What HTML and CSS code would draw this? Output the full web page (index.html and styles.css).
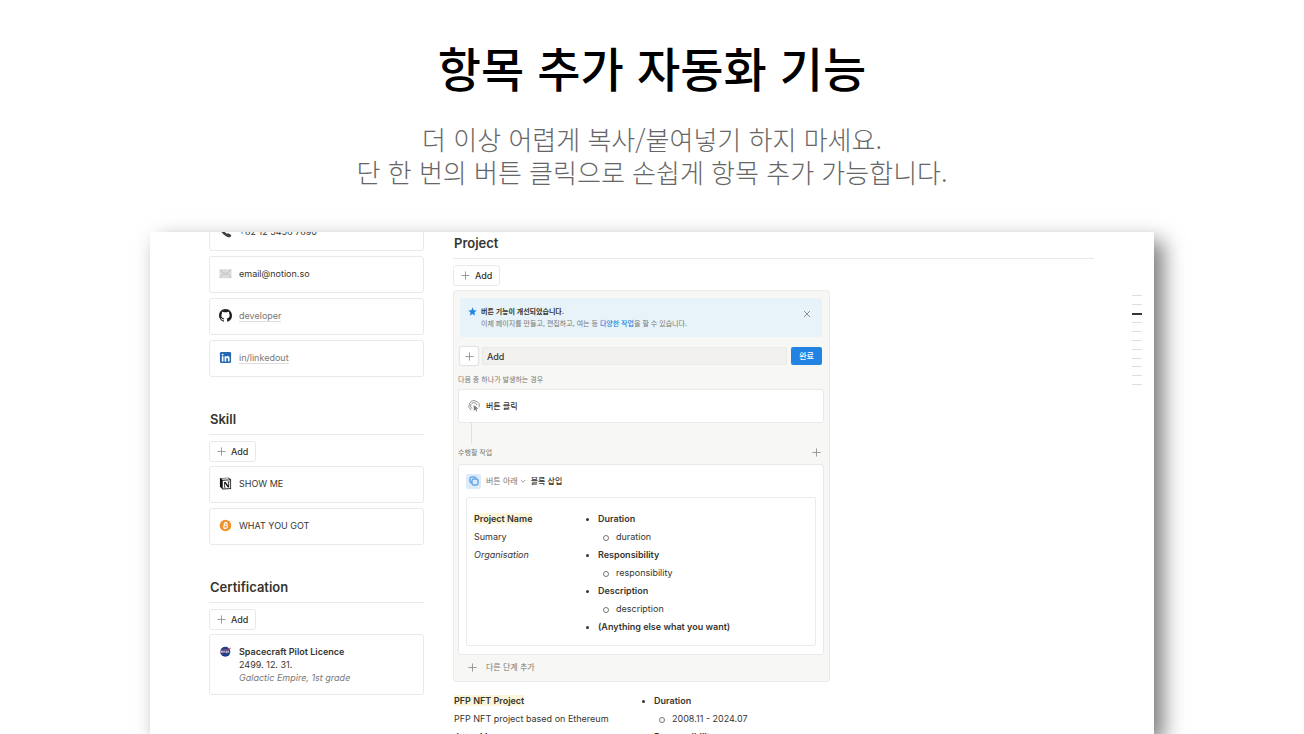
FILE: index.html
```html
<!DOCTYPE html>
<html lang="ko">
<head>
<meta charset="utf-8">
<meta name="viewport" content="width=device-width, initial-scale=1">
<title>항목 추가 자동화 기능</title>
<link rel="stylesheet" href="styles.css">
</head>
<body>
<svg class="defs" aria-hidden="true">
  <symbol id="plus" viewBox="0 0 10 10"><path d="M5 .5v9M.5 5h9" fill="none" stroke="currentColor" stroke-width="1"/></symbol>
</svg>
<header class="hero">
  <h1 class="hero-title">항목 추가 자동화 기능</h1>
  <p class="hero-text">더 이상 어렵게 복사/붙여넣기 하지 마세요.<br>단 한 번의 버튼 클릭으로 손쉽게 항목 추가 가능합니다.</p>
</header>
<main class="sheet">
  <aside class="side">
    <div class="cards contact">
      <div class="card">
        <svg class="icon" viewBox="0 0 14 14"><path d="M1.6 1.5 3.4.7 5.600 4 4.500 5.300Q6 7.800 8.700 9.500L10.200 8.800 13.300 11 12.400 12.900Q10.500 14 7.500 12.200 3 9.500 1.200 4.500.8 2.400 1.600 1.500z" fill="#3d4043"/></svg>
        <span>+82 12 3456 7890</span>
      </div>
      <div class="card">
        <svg class="icon" viewBox="0 0 14 14"><rect x=".5" y="2.500" width="13" height="9.500" rx=".6" fill="#dcdcdc"/><path d="M.8 2.900 7 8l6.200-5.100M.8 11.700 5.400 7M13.200 11.700 8.600 7" fill="none" stroke="#b4b4b4" stroke-width=".8"/></svg>
        <span>email@notion.so</span>
      </div>
      <div class="card">
        <svg class="icon" viewBox="0 0 16 16"><path fill="#1b1f23" d="M8 0C3.580 0 0 3.580 0 8c0 3.540 2.290 6.530 5.470 7.590.4.070.55-.17.55-.38 0-.19-.01-.82-.01-1.490-2.010.37-2.530-.49-2.690-.94-.09-.23-.48-.94-.82-1.130-.28-.15-.68-.52-.01-.53.63-.01 1.080.58 1.230.82.72 1.210 1.870.87 2.330.66.07-.52.28-.87.51-1.070-1.780-.2-3.640-.89-3.640-3.950 0-.87.31-1.590.82-2.150-.08-.2-.36-1.020.08-2.120 0 0 .67-.21 2.200.82.64-.18 1.320-.27 2-.27s1.360.09 2 .27c1.530-1.040 2.200-.82 2.200-.82.44 1.100.16 1.920.08 2.120.51.56.82 1.270.82 2.150 0 3.070-1.870 3.750-3.650 3.950.29.25.54.73.54 1.480 0 1.070-.01 1.930-.01 2.200 0 .21.15.46.55.38A8 8 0 0 0 16 8c0-4.420-3.580-8-8-8z"/></svg>
        <a class="link" href="#developer">developer</a>
      </div>
      <div class="card">
        <svg class="icon" viewBox="0 0 14 14"><rect x="1" y="1" width="12" height="12" rx="1.500" fill="#2467b2"/><circle cx="3.900" cy="3.900" r="1" fill="#fff"/><path d="M3 5.600h1.800v5.600H3zM6 5.600h1.700v.8c.9-1.400 3.700-1.300 3.700 1.500v3.300H9.600V8.300c0-1.600-1.800-1.500-1.800 0v2.900H6z" fill="#fff"/></svg>
        <a class="link" href="#linkedin">in/linkedout</a>
      </div>
    </div>

    <section class="block">
      <h2 class="heading">Skill</h2>
      <button class="add" type="button"><svg class="plus"><use href="#plus"/></svg>Add</button>
      <div class="cards">
        <div class="card">
          <svg class="icon" viewBox="0 0 14 14"><path d="M1 1.200 10.500.8 13 2.800v10L4 13.400 1 10.400z" fill="#111"/><path d="M2 1.700 10 1.400l1.600 1.200-7.800.4z" fill="#fff"/><path d="M4 4l8.100-.5v8.700L4 12.500z" fill="#fff"/><path d="M5.200 5.300h1.900L10 9.200V5.600l-.7-.2v-.5h2.200v.5l-.6.2v5.800H9.600L6.400 7v3.600l.8.200v.5H5.100v-.5l.5-.2V5.800z" fill="#111"/></svg>
          <span>SHOW ME</span>
        </div>
        <div class="card">
          <svg class="icon" viewBox="0 0 14 14"><circle cx="7" cy="7" r="6.200" fill="#f0922b"/><path d="M5.900 4.200h1.500c2 0 2 2.500.1 2.600 2.200 0 2.100 3-.2 3H4.900M5.900 4.200 5 9.800M5.700 6.800h2M7 3l-.2 1M8.300 3.100l-.2 1M5.900 10l-.2 1M7.200 10 7 11" fill="none" stroke="#fff" stroke-width="1.100"/></svg>
          <span>WHAT YOU GOT</span>
        </div>
      </div>
    </section>

    <section class="block">
      <h2 class="heading">Certification</h2>
      <button class="add" type="button"><svg class="plus"><use href="#plus"/></svg>Add</button>
      <div class="cards">
        <div class="card card-tall">
          <svg class="icon" viewBox="0 0 14 14"><circle cx="6.800" cy="7.200" r="5.400" fill="#1d3f8f"/><path d="M2.500 8.300V6.200l1.400 2V6.200M4.700 8.300l.8-2.100.8 2.100M8.500 6.300H7.400v.9h1v1H7.100M9.200 8.300l.8-2.100.8 2.100" fill="none" stroke="#fff" stroke-width=".7"/><path d="M1 9.200Q7 8 12.800 3.200 9 5 1.500 5.600" fill="none" stroke="#d9485a" stroke-width=".6"/></svg>
          <div><strong>Spacecraft Pilot Licence</strong><br>2499. 12. 31.<br><em class="muted">Galactic Empire, 1st grade</em></div>
        </div>
      </div>
    </section>
  </aside>

  <section class="main">
    <h2 class="heading">Project</h2>
    <button class="add" type="button"><svg class="plus"><use href="#plus"/></svg>Add</button>

    <div class="panel">
      <div class="notice">
        <svg class="star" viewBox="0 0 10 10"><path d="M5 .4 6.300 3.700l3.400.2L7.100 6.100l.8 3.400L5 7.700 2.100 9.500l.8-3.400L.3 3.900l3.400-.2z" fill="#2383e2"/></svg>
        <p class="notice-text"><strong>버튼 기능이 개선되었습니다.</strong><br>이제 페이지를 만들고, 편집하고, 여는 등 <a class="notice-link" href="#actions">다양한 작업</a>을 할 수 있습니다.</p>
        <button class="close" type="button" aria-label="닫기"><svg viewBox="0 0 8 8" width="8" height="8"><path d="M1 1l6 6M7 1 1 7" stroke="currentColor" stroke-width=".8"/></svg></button>
      </div>
      <div class="form">
        <button class="pick" type="button" aria-label="아이콘"><svg class="plus"><use href="#plus"/></svg></button>
        <input class="field" type="text" value="Add" aria-label="버튼 이름">
        <button class="done" type="button">완료</button>
      </div>
      <p class="label">다음 중 하나가 발생하는 경우</p>
      <div class="step trigger">
        <svg class="click" viewBox="0 0 12 12" fill="none" stroke="#787774" stroke-width=".8"><path d="M3 10.200A5.200 5.200 0 1 1 11.100 7.300M4.300 8.700A3.200 3.200 0 1 1 9 5.500"/><path d="M5.600 5.100 10.300 8.600 8.300 8.900 9.300 11 8.300 11.400 7.400 9.400 5.900 10.700z" fill="#787774" stroke="none"/></svg>
        <strong>버튼 클릭</strong>
      </div>
      <div class="rail"></div>
      <div class="label label-row"><span>수행할 작업</span><button class="bare" type="button" aria-label="작업 추가"><svg class="plus"><use href="#plus"/></svg></button></div>
      <div class="step action">
        <div class="action-head">
          <span class="tile"><svg viewBox="0 0 10 10" width="10" height="10" fill="none" stroke="#2383e2" stroke-width="1"><rect x="3" y="3" width="6" height="6" rx="1.200"/><path d="M2.500 7H2.200Q1 7 1 5.800V2.200Q1 1 2.200 1h3.600Q7 1 7 2.200V2.500"/></svg></span>
          <button class="where" type="button">버튼 아래<svg viewBox="0 0 6 6" width="6" height="6"><path d="M.8 2 3 4.200 5.200 2" fill="none" stroke="currentColor" stroke-width=".7"/></svg></button>
          <strong>블록 삽입</strong>
        </div>
        <div class="template">
          <div class="about">
            <p><mark>Project Name</mark></p>
            <p>Sumary</p>
            <p><em>Organisation</em></p>
          </div>
          <ul class="facts">
            <li><strong>Duration</strong><ul><li>duration</li></ul></li>
            <li><strong>Responsibility</strong><ul><li>responsibility</li></ul></li>
            <li><strong>Description</strong><ul><li>description</li></ul></li>
            <li><strong>(Anything else what you want)</strong></li>
          </ul>
        </div>
      </div>
      <button class="more" type="button"><svg class="plus"><use href="#plus"/></svg>다른 단계 추가</button>
    </div>

    <div class="entry">
      <div class="about">
        <p><mark>PFP NFT Project</mark></p>
        <p>PFP NFT project based on Ethereum</p>
        <p><em>Astro Moon</em></p>
      </div>
      <ul class="facts">
        <li><strong>Duration</strong><ul><li>2008.11 - 2024.07</li></ul></li>
        <li><strong>Responsibility</strong></li>
      </ul>
    </div>
  </section>

  <nav class="outline" aria-label="목차">
    <i></i><i></i><i class="current"></i><i></i><i></i><i></i><i></i><i></i><i></i><i></i><i></i>
  </nav>
</main>
</body>
</html>
```
FILE: styles.css
```css
* { box-sizing: border-box; }

body {
  margin: 0;
  height: 100vh;
  overflow: hidden;
  display: flex;
  flex-direction: column;
  background: #fff;
  color: #37352f;
  font: 9px/13px Inter, "Noto Sans CJK KR", sans-serif;
}

p, h1, h2, ul { margin: 0; padding: 0; }
button, input { font: inherit; color: inherit; margin: 0; }
button { border: 0; background: none; padding: 0; display: flex; align-items: center; }
strong { font-weight: 600; }
svg { display: block; flex: none; }
.defs { display: none; }

.hero {
  flex: none;
  height: 232px;
  padding-top: 32px;
  text-align: center;
  font-family: "Noto Sans CJK KR", sans-serif;
}
.hero-title { font-size: 47px; line-height: 70px; font-weight: 500; color: #000; }
.hero-text { margin-top: 20px; font-size: 26px; line-height: 33px; font-weight: 300; color: #666; }

.sheet {
  flex: 1;
  min-height: 0;
  margin: 0 150px;
  padding: 0 12px 0 59px;
  display: flex;
  background: #fff;
  box-shadow: 9px 9px 20px rgba(0, 0, 0, .53);
  clip-path: inset(-40px -40px 0 -40px);
  overflow: hidden;
}

.side { flex: none; width: 215px; }
.main { flex: 1; min-width: 0; margin: 0 38px 0 29px; }

.heading {
  height: 27px;
  padding: 2px 1px 5px;
  border-bottom: 1px solid #e9e9e8;
  font-size: 13px;
  line-height: 19px;
  font-weight: 600;
}

.cards { display: flex; flex-direction: column; gap: 5px; }
.contact { margin-top: -18px; }
.card {
  display: flex;
  align-items: center;
  gap: 7px;
  height: 37px;
  padding: 0 9px 2px;
  border: 1px solid #e9e9e8;
  border-radius: 3px;
}
.card-tall { height: 61px; align-items: flex-start; padding-top: 10px; }
.icon { width: 13px; height: 13px; }
.link { color: #787774; text-decoration: none; border-bottom: 1px solid #dededc; line-height: 11px; }
.muted { color: #787774; }

.block { margin-top: 31px; }
.add {
  height: 21px;
  margin: 6px 0 4px;
  padding: 0 7px;
  gap: 5px;
  border: 1px solid #e9e9e8;
  border-radius: 3px;
  font-weight: 500;
}
.plus { width: 9px; height: 9px; color: #91918e; }

.panel {
  max-width: 377px;
  padding: 7px 5px 2px 4px;
  border: 1px solid #ebebea;
  border-radius: 3px;
  background: #f7f7f5;
}
.notice {
  display: flex;
  align-items: flex-start;
  gap: 4px;
  height: 39px;
  margin: 0 2px 10px;
  padding: 8px 11px 0 8px;
  border-radius: 2px;
  background: #e7f3f8;
}
.star { width: 9px; height: 9px; margin-top: 1px; }
.notice-text { flex: 1; font-size: 7px; line-height: 12px; color: #787774; }
.notice-text strong { color: #37352f; }
.notice-link { color: #2383e2; font-weight: 500; text-decoration: none; }
.close { color: #787774; margin-top: 4px; }

.form { display: flex; gap: 4px; height: 18px; margin: 0 2px; }
.pick { width: 18px; justify-content: center; background: #fff; border-radius: 2px; box-shadow: 0 0 2px rgba(0, 0, 0, .3); }
.field { flex: 1; min-width: 0; padding: 0 4px; border: 1px solid #e9e9e7; border-radius: 2px; background: #f2f1ef; font-weight: 500; }
.done { width: 31px; justify-content: center; border-radius: 2px; background: #2383e2; color: #fff; font-size: 8px; font-weight: 500; }

.label { height: 13px; margin: 8px 0 3px; font-size: 7px; line-height: 13px; color: #787774; }
.label-row { display: flex; justify-content: space-between; align-items: center; margin: 2px 3px 5px 0; }
.step { border: 1px solid #e9e9e7; border-radius: 3px; background: #fff; }
.trigger { display: flex; align-items: center; gap: 6px; height: 34px; padding: 0 9px; }
.trigger strong, .action-head strong { font-size: 8px; font-weight: 500; }
.click { width: 12px; height: 12px; }
.rail { width: 1px; height: 21px; margin-left: 13px; background: #e3e2e0; }

.action { padding: 8px 7px; }
.action-head { display: flex; align-items: center; gap: 5px; height: 16px; }
.tile { display: grid; place-items: center; width: 15px; height: 15px; border-radius: 2px; background: #ddebf8; }
.where { gap: 2px; color: #787774; font-size: 8px; }
.template { display: grid; grid-template-columns: 106px 1fr; height: 149px; margin-top: 8px; padding: 12px 7px; border: 1px solid #ebebea; border-radius: 2px; }
.about, .facts { line-height: 18px; }
mark { background: #fbf5da; color: inherit; font-weight: 600; }

.facts { list-style: none; }
.facts li { position: relative; padding-left: 18px; }
.facts li::before {
  content: "";
  position: absolute;
  left: 6px;
  top: 8px;
  width: 3px;
  height: 3px;
  border-radius: 50%;
  background: #37352f;
}
.facts ul { list-style: none; }
.facts li li::before { left: 5px; top: 7px; width: 4px; height: 4px; border: 1px solid #787774; background: none; }

.more { height: 24px; padding-left: 10px; gap: 9px; color: #787774; font-size: 8px; }
.entry { display: grid; grid-template-columns: 182px 1fr; padding: 10px 1px; }

.outline {
  flex: none;
  width: 10px;
  height: 90px;
  margin-top: 63px;
  display: flex;
  flex-direction: column;
  justify-content: space-between;
}
.outline i { height: 1px; background: #dededd; }
.outline .current { height: 2px; background: #37352f; }
```
